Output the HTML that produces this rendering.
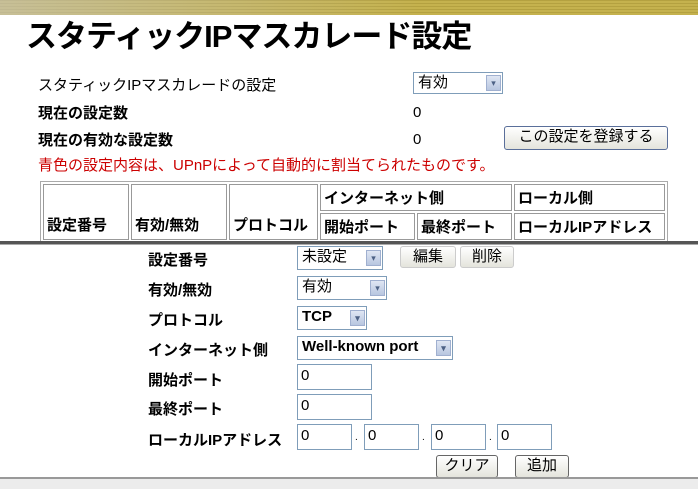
<html><head><style>
body{margin:0;width:698px;height:487px;overflow:hidden;background:#fff;font-family:"Liberation Sans","Noto Sans CJK JP",sans-serif;position:relative}
.a{position:absolute;white-space:nowrap}
.t{font-size:15px;color:#000}
.b{font-weight:bold}
.sel{position:absolute;border:1px solid #7f9db9;background:#fff;font-size:15px;height:22px;box-sizing:border-box;padding:1px 4px;line-height:18px}
.arr{position:absolute;right:1px;top:2px;width:15px;height:16px;background:linear-gradient(#dfe6f3,#b8c6e0);border:1px solid #a0b0d0;box-sizing:border-box;font-size:9px;text-align:center;line-height:14px;color:#4d6185}
.in{position:absolute;border:1px solid #7f9db9;background:#fff;height:26px;box-sizing:border-box;font-size:15px;padding:2px 3px}
.btn{position:absolute;border:1px solid #777;border-radius:3px;background:linear-gradient(#fff,#e4e4dc);font-size:15px;text-align:center;box-sizing:border-box;line-height:20px}
td{border:1px solid #999;padding:0 3px;font-size:15px;font-weight:bold;overflow:hidden;white-space:nowrap}
</style></head><body>
<div class="a" style="left:0;top:0;width:698px;height:15px;background:repeating-linear-gradient(#b4a140 0 1px,#c5b24e 1px 3px),#bba946"></div>
<div class="a" style="left:0;top:0;width:698px;height:15px;background:linear-gradient(90deg,rgba(200,200,200,.6),rgba(200,200,200,0) 60%)"></div>
<div class="a b" style="left:26px;top:11px;font-size:31px;letter-spacing:-1px">スタティックIPマスカレード設定</div>
<div class="a t" style="left:38px;top:74px">スタティックIPマスカレードの設定</div>
<div class="sel" style="left:413px;top:72px;width:90px">有効<div class="arr">▾</div></div>
<div class="a t b" style="left:38px;top:102px">現在の設定数</div>
<div class="a t" style="left:413px;top:104px">0</div>
<div class="a t b" style="left:38px;top:129px">現在の有効な設定数</div>
<div class="a t" style="left:413px;top:131px">0</div>
<div class="btn" style="left:504px;top:126px;width:164px;height:24px;border-color:#5a6f9a">この設定を登録する</div>
<div class="a" style="left:38px;top:154px;font-size:15px;color:#c00">青色の設定内容は、UPnPによって自動的に割当てられたものです。</div>
<table class="a" style="left:40px;top:181px;border:1px solid #aaa;border-collapse:separate;border-spacing:2px;width:628px;table-layout:fixed">
<colgroup><col style="width:86px"><col style="width:96px"><col style="width:89px"><col style="width:95px"><col style="width:95px"><col></colgroup>
<tr style="height:27px"><td rowspan="2" style="vertical-align:bottom;height:56px;padding-bottom:4px">設定番号</td><td rowspan="2" style="vertical-align:bottom;padding-bottom:4px">有効/無効</td><td rowspan="2" style="vertical-align:bottom;padding-bottom:4px">プロトコル</td><td colspan="2">インターネット側</td><td>ローカル側</td></tr>
<tr style="height:27px"><td>開始ポート</td><td>最終ポート</td><td>ローカルIPアドレス</td></tr>
</table>
<div class="a" style="left:0;top:241px;width:698px;height:3px;background:#555;border-bottom:1px solid #aaa"></div>
<div class="a" style="left:0;top:245px;width:698px;height:233px;background:#fff"></div>
<div class="a t b" style="left:148px;top:249px">設定番号</div>
<div class="sel" style="left:297px;top:246px;width:86px;height:24px">未設定<div class="arr" style="top:3px">▾</div></div>
<div class="btn" style="left:400px;top:246px;width:56px;height:22px;border-color:#ccc">編集</div>
<div class="btn" style="left:460px;top:246px;width:54px;height:22px;border-color:#ccc">削除</div>
<div class="a t b" style="left:148px;top:279px">有効/無効</div>
<div class="sel" style="left:297px;top:276px;width:90px;height:24px">有効<div class="arr" style="top:3px">▾</div></div>
<div class="a t b" style="left:148px;top:309px">プロトコル</div>
<div class="sel" style="left:297px;top:306px;width:70px;height:24px;font-weight:bold">TCP<div class="arr" style="top:3px">▾</div></div>
<div class="a t b" style="left:148px;top:339px">インターネット側</div>
<div class="sel" style="left:297px;top:336px;width:156px;height:24px;font-weight:bold">Well-known port<div class="arr" style="top:3px">▾</div></div>
<div class="a t b" style="left:148px;top:369px">開始ポート</div>
<div class="in" style="left:297px;top:364px;width:75px">0</div>
<div class="a t b" style="left:148px;top:398px">最終ポート</div>
<div class="in" style="left:297px;top:394px;width:75px">0</div>
<div class="a t b" style="left:148px;top:429px">ローカルIPアドレス</div>
<div class="in" style="left:297px;top:424px;width:55px">0</div>
<div class="a t" style="left:355px;top:432px;font-size:10px">.</div>
<div class="in" style="left:364px;top:424px;width:55px">0</div>
<div class="a t" style="left:422px;top:432px;font-size:10px">.</div>
<div class="in" style="left:431px;top:424px;width:55px">0</div>
<div class="a t" style="left:489px;top:432px;font-size:10px">.</div>
<div class="in" style="left:497px;top:424px;width:55px">0</div>
<div class="btn" style="left:436px;top:455px;width:62px;height:23px;border-color:#666">クリア</div>
<div class="btn" style="left:515px;top:455px;width:54px;height:23px;border-color:#666">追加</div>
<div class="a" style="left:0;top:477px;width:698px;height:10px;background:#ececec;border-top:2px solid #999"></div>
</body></html>
